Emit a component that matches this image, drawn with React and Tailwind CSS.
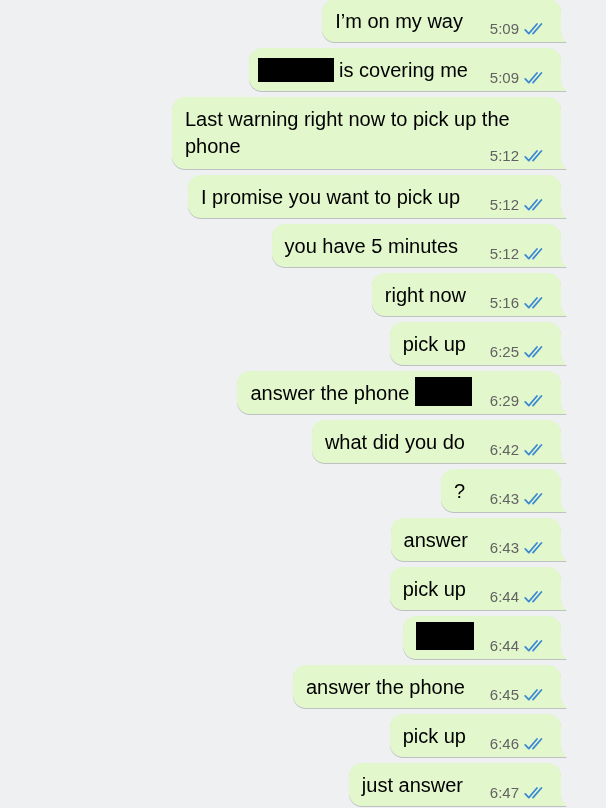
import React from "react";

function Rect({ cls }) {
  return <span className={`inline-block bg-black align-top ${cls}`} />;
}

function Checks() {
  return (
    <svg width="22" height="12" viewBox="0 0 22 12" fill="none" className="ml-[5px]">
      <path d="M1.2 6.8 L4.8 10.6 L13 1" stroke="#3a88d4" strokeWidth="1.7" strokeLinecap="round" strokeLinejoin="round" />
      <path d="M9 10.6 L17.4 1" stroke="#3a88d4" strokeWidth="1.7" strokeLinecap="round" />
    </svg>
  );
}

const msgs = [
  { c: "I’m on my way", time: "5:09", sp: "w-[83px]", pb: "pb-[7px]" },
  {
    c: (
      <>
        <Rect cls="w-[76px] h-[24px] mt-[1px] ml-[-4px]" /> is covering me
      </>
    ),
    time: "5:09",
    sp: "w-[78px]",
    pb: "pb-[7px]",
  },
  { c: "Last warning right now to pick up the phone", time: "5:12", sp: "w-[83px]", pb: "pb-[9px]" },
  { c: "I promise you want to pick up", time: "5:12", sp: "w-[86px]", pb: "pb-[7px]" },
  { c: "you have 5 minutes", time: "5:12", sp: "w-[88px]", pb: "pb-[7px]" },
  { c: "right now", time: "5:16", sp: "w-[80px]", pb: "pb-[7px]" },
  { c: "pick up", time: "6:25", sp: "w-[80px]", pb: "pb-[7px]" },
  {
    c: (
      <>
        answer the phone <Rect cls="w-[57px] h-[29px] mt-[-3px] mb-[-3px]" />
      </>
    ),
    time: "6:29",
    sp: "w-[74px]",
    pb: "pb-[7px]",
  },
  { c: "what did you do", time: "6:42", sp: "w-[81px]", pb: "pb-[7px]" },
  { c: "?", time: "6:43", sp: "w-[81px]", pb: "pb-[7px]" },
  { c: "answer", time: "6:43", sp: "w-[78px]", pb: "pb-[7px]" },
  { c: "pick up", time: "6:44", sp: "w-[80px]", pb: "pb-[7px]" },
  { c: <Rect cls="w-[58px] h-[28px] mt-[-3px] mb-[-2px]" />, time: "6:44", sp: "w-[72px]", pb: "pb-[7px]" },
  { c: "answer the phone", time: "6:45", sp: "w-[81px]", pb: "pb-[7px]" },
  { c: "pick up", time: "6:46", sp: "w-[80px]", pb: "pb-[7px]" },
  { c: "just answer", time: "6:47", sp: "w-[83px]", pb: "pb-[7px]" },
];

function Bubble({ m }) {
  return (
    <div className="flex justify-end">
      <div
        className={`relative max-w-[389px] rounded-[13px] rounded-br-none bg-[#e2f7cc] pl-[13px] pr-[15px] pt-[9px] ${m.pb} text-[20px] leading-[27px] text-black drop-shadow-[0_1px_0.6px_rgba(0,0,0,0.2)]`}
      >
        {m.c}
        <span className={`inline-block h-[1px] ${m.sp}`} />
        <div className="absolute right-[15px] bottom-[4px] flex items-center text-[15px] leading-[18px] text-[#626262]">
          <span>{m.time}</span>
          <Checks />
        </div>
        <svg
          width="6"
          height="11"
          viewBox="0 0 6 11"
          className="absolute left-full bottom-0"
        >
          <path d="M0 0 C0 5 2 8.8 6 11 L0 11 Z" fill="#e2f7cc" />
        </svg>
      </div>
    </div>
  );
}

export default function App() {
  return (
    <div
      className="w-[606px] h-[808px] overflow-hidden bg-[#eef0f2]"
      style={{ fontFamily: '"Liberation Sans", Arial, sans-serif' }}
    >
      <div className="mt-[-1px] flex flex-col gap-[6px] pr-[45px]">
        {msgs.map((m, i) => (
          <Bubble key={i} m={m} />
        ))}
      </div>
    </div>
  );
}
